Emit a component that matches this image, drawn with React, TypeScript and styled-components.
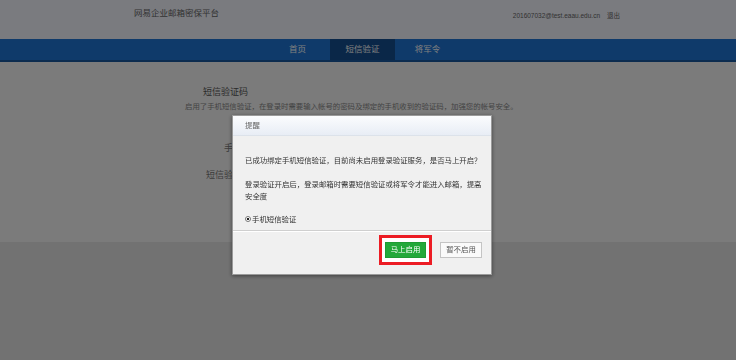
import * as React from 'react';
import styled, { createGlobalStyle } from 'styled-components';

const fontStack = '"Liberation Sans", "Noto Sans CJK SC", sans-serif';

const GlobalStyle = createGlobalStyle`
  html, body {
    margin: 0;
    padding: 0;
    background: #e4e4e4;
    font-family: ${fontStack};
  }
  * {
    box-sizing: border-box;
  }
`;

const Page = styled.div`
  width: 736px;
  min-height: 360px;
  background: #e4e4e4;
`;

const Header = styled.header`
  height: 39px;
  background: #f4f6ff;
  display: flex;
  justify-content: space-between;
  align-items: flex-start;
  padding: 0 116px 0 134px;
`;

const Brand = styled.div`
  font-size: 8.5px;
  line-height: 26px;
  color: #666;
`;

const User = styled.div`
  display: flex;
  gap: 7px;
  margin-top: 10px;
  font-size: 6.5px;
  line-height: 12px;
  color: #666;
`;

const Nav = styled.nav`
  height: 23px;
  background: #1e74d4;
  border-bottom: 2px solid #18589f;
  display: flex;
  padding-left: 265px;
`;

const NavItem = styled.a<{ $active?: boolean }>`
  width: 65px;
  height: 21px;
  line-height: 21px;
  text-align: center;
  font-size: 8.5px;
  color: #fff;
  background: ${(p) => (p.$active ? '#144e90' : 'transparent')};
`;

const Main = styled.main`
  height: 180px;
  background: #f6f6f6;
  padding: 23px 0 0 185px;
`;

const SectionTitle = styled.h2`
  margin: 0 0 3px 18px;
  font-size: 9px;
  line-height: 14px;
  font-weight: normal;
  color: #555;
`;

const Intro = styled.p`
  margin: 0;
  font-size: 7.4px;
  line-height: 10px;
  color: #888;
  white-space: nowrap;
`;

const Form = styled.div`
  display: grid;
  grid-template-columns: 75px 160px;
  row-gap: 9px;
  margin-top: 27px;
  align-items: center;
`;

const Label = styled.span`
  text-align: right;
  font-size: 9px;
  line-height: 18px;
  color: #777;
`;

const Field = styled.span`
  height: 16px;
  margin-left: 4px;
  border: 1px solid #ccc;
  background: #fff;
`;

const Mask = styled.div`
  position: fixed;
  inset: 0;
  background: rgba(0, 0, 0, 0.5);
`;

const Dialog = styled.div`
  position: fixed;
  left: 232px;
  top: 115px;
  width: 260px;
  background: #f0f0f0;
  border: 1px solid #9a9a9a;
  box-shadow: 0 1px 4px rgba(0, 0, 0, 0.45);
`;

const DialogTitle = styled.div`
  height: 20px;
  line-height: 19px;
  padding-left: 12px;
  font-size: 7.4px;
  color: #666;
  background: linear-gradient(#fbfcfe, #e8edf5);
  border-bottom: 1px solid #dce2ea;
`;

const DialogBody = styled.div`
  padding: 19px 6px 4px 12px;
`;

const Text = styled.p`
  margin: 0 0 12px;
  font-size: 7.4px;
  line-height: 12px;
  color: #333;
  white-space: nowrap;
`;

const RadioRow = styled.label`
  display: flex;
  align-items: center;
  gap: 1px;
  margin-top: -1px;
  font-size: 7.4px;
  line-height: 12px;
  color: #333;
`;

const RadioDot = styled.span`
  width: 6px;
  height: 6px;
  border-radius: 50%;
  border: 1px solid #777;
  background: radial-gradient(circle, #222 0 35%, #fff 45%);
  margin-top: -3px;
`;

const DialogFooter = styled.div`
  display: flex;
  justify-content: flex-end;
  align-items: center;
  gap: 8px;
  padding: 4px 9px 9px;
  border-top: 1px solid #cfcfcf;
  box-shadow: inset 0 1px 0 #fff;
`;

const Highlight = styled.div`
  border: 3px solid #ec1c24;
  background: #fff;
  padding: 4px 3px;
`;

const Button = styled.button<{ $primary?: boolean }>`
  display: block;
  height: 16px;
  width: ${(p) => (p.$primary ? '41px' : '42px')};
  padding: 0;
  font-family: ${fontStack};
  font-size: 7.4px;
  line-height: 14px;
  color: ${(p) => (p.$primary ? '#fff' : '#555')};
  background: ${(p) => (p.$primary ? '#23a83a' : '#fafafa')};
  border: 1px solid ${(p) => (p.$primary ? '#1f9a34' : '#c4c4c4')};
`;

const App: React.FunctionComponent = () => (
  <>
    <GlobalStyle />
    <Page>
      <Header>
        <Brand>网易企业邮箱密保平台</Brand>
        <User>
          <span>201607032@test.eaau.edu.cn</span>
          <span>退出</span>
        </User>
      </Header>
      <Nav>
        <NavItem>首页</NavItem>
        <NavItem $active>短信验证</NavItem>
        <NavItem>将军令</NavItem>
      </Nav>
      <Main>
        <SectionTitle>短信验证码</SectionTitle>
        <Intro>
          启用了手机短信验证，在登录时需要输入帐号的密码及绑定的手机收到的验证码，加强您的帐号安全。
        </Intro>
        <Form>
          <Label>手机号：</Label>
          <Field />
          <Label>短信验证码：</Label>
          <Field />
        </Form>
      </Main>
    </Page>
    <Mask />
    <Dialog>
      <DialogTitle>提醒</DialogTitle>
      <DialogBody>
        <Text>已成功绑定手机短信验证，目前尚未启用登录验证服务，是否马上开启？</Text>
        <Text>
          登录验证开启后，登录邮箱时需要短信验证或将军令才能进入邮箱，提高
          <br />
          安全度
        </Text>
        <RadioRow>
          <RadioDot />
          手机短信验证
        </RadioRow>
      </DialogBody>
      <DialogFooter>
        <Highlight>
          <Button $primary>马上启用</Button>
        </Highlight>
        <Button>暂不启用</Button>
      </DialogFooter>
    </Dialog>
  </>
);

export default App;
